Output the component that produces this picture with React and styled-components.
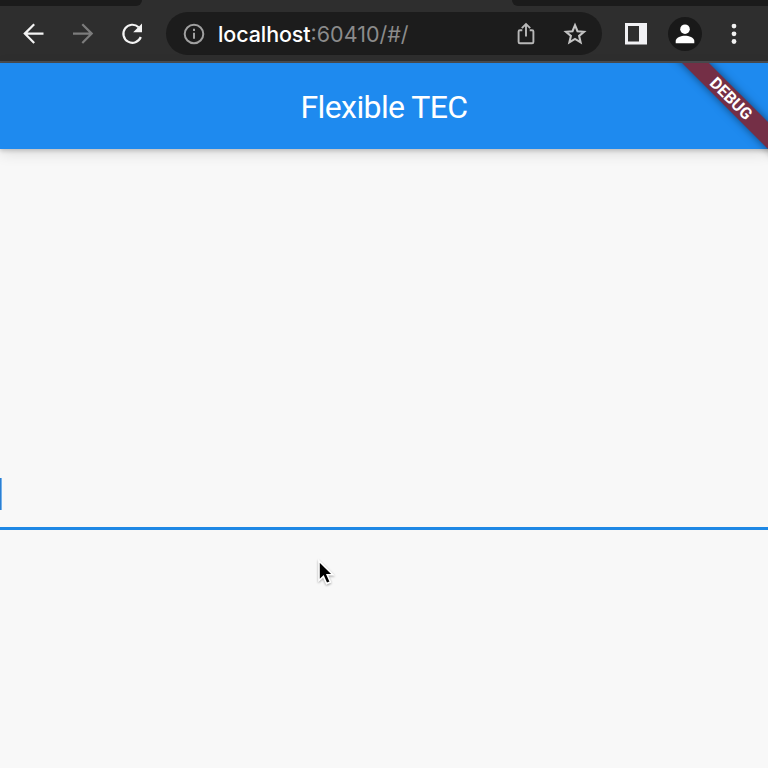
import React from "react";
import styled, { createGlobalStyle } from "styled-components";

const GlobalStyle = createGlobalStyle`
  * { box-sizing: border-box; }
  body { margin: 0; background: #f8f8f8; }
`;

const Window = styled.div`
  position: relative;
  display: flex;
  flex-direction: column;
  width: 768px;
  height: 768px;
  overflow: hidden;
  background: #f8f8f8;
`;

const TabStrip = styled.div`
  display: flex;
  justify-content: space-between;
  flex: none;
  height: 6px;
  background: #2e2e2e;
`;

const InactiveTab = styled.div`
  width: ${(p) => p.$width}px;
  background: #1b1b1b;
  border-radius: ${(p) => (p.$side === "left" ? "0 0 8px 0" : "0 0 0 8px")};
`;

const Toolbar = styled.div`
  display: flex;
  align-items: center;
  flex: none;
  height: 57px;
  padding: 0 19px 0 19px;
  background: #2e2e2e;
  border-bottom: 2px solid #4b4d50;
`;

const IconButton = styled.button`
  display: flex;
  flex: none;
  width: 30px;
  height: 30px;
  padding: 0;
  margin: 0 ${(p) => p.$gap || 0}px 0 0;
  border: 0;
  background: none;
  color: ${(p) => p.$color || "#f4f4f4"};
`;

const AddressBar = styled.div`
  display: flex;
  align-items: center;
  flex: none;
  width: 436px;
  height: 43px;
  margin-right: 19px;
  padding: 0 12px 0 13px;
  border-radius: 22px;
  background: #1c1c1c;
`;

const Url = styled.span`
  flex: 1;
  margin-left: 9px;
  font: 400 21.5px/30px Inter, Roboto, sans-serif;
  color: #8b8b8b;
  white-space: nowrap;
`;

const Host = styled.span`
  color: #ffffff;
  font-weight: 500;
  letter-spacing: -0.1px;
`;

const Avatar = styled.div`
  display: flex;
  align-items: center;
  justify-content: center;
  flex: none;
  width: 34px;
  height: 34px;
  margin-right: 17px;
  border-radius: 50%;
  background: #191919;
`;

const AppBar = styled.header`
  position: relative;
  display: flex;
  align-items: center;
  justify-content: center;
  flex: none;
  height: 86px;
  background: #1e8aef;
  box-shadow: 0 2px 4px rgba(0, 0, 0, 0.16), 0 4px 14px rgba(0, 0, 0, 0.12);
`;

const Title = styled.h1`
  margin: 0;
  padding-top: 1px;
  font: 400 32px/40px Roboto, sans-serif;
  letter-spacing: -0.6px;
  color: #ffffff;
`;

const BannerCorner = styled.div`
  position: absolute;
  top: 0;
  right: 0;
  width: 110px;
  height: 110px;
  overflow: hidden;
`;

const Banner = styled.div`
  position: absolute;
  top: 26px;
  left: -17px;
  width: 180px;
  height: 19px;
  transform: rotate(45deg);
  background: #742f46;
  box-shadow: 0 0 9px rgba(0, 0, 0, 0.5);
  font: 700 16.3px/20px Roboto, sans-serif;
  text-align: center;
  color: #ffffff;
`;

const Content = styled.main`
  flex: 1;
  padding-top: 317px;
`;

const TextField = styled.div`
  height: 64px;
  padding-top: 12px;
  border-bottom: 3px solid #1e88e5;
`;

const Caret = styled.div`
  width: 2px;
  height: 32px;
  background: linear-gradient(90deg, #2c7fd2 50%, #73b1eb 50%);
`;

const Pointer = styled.svg`
  position: absolute;
  left: 315px;
  top: 556px;
  filter: drop-shadow(0 1px 1px rgba(0, 0, 0, 0.35));
`;

function Glyph({ children, fill = "none", stroke = "currentColor", width = 2.2 }) {
  return (
    <svg width="30" height="30" viewBox="0 0 30 30" fill={fill} stroke={stroke} strokeWidth={width}>
      {children}
    </svg>
  );
}

export default function App() {
  return (
    <Window>
      <GlobalStyle />
      <TabStrip>
        <InactiveTab $side="left" $width={142} />
        <InactiveTab $side="right" $width={256} />
      </TabStrip>
      <Toolbar>
        <IconButton $gap={19}>
          <Glyph><path d="M24.5 14.6H6.2M15.2 5.2 5.8 14.6l9.4 9.4" /></Glyph>
        </IconButton>
        <IconButton $gap={19} $color="#7c7c7c">
          <Glyph><path d="M5 14.6h18.3M14.3 5.2l9.4 9.4-9.4 9.4" /></Glyph>
        </IconButton>
        <IconButton $gap={19}>
          <Glyph>
            <path d="M21.6 8.2A9 9 0 1 0 23.8 18" />
            <path d="M25 4.4v8.8h-8.8z" fill="currentColor" stroke="none" />
          </Glyph>
        </IconButton>
        <AddressBar>
          <IconButton $color="#a0a0a0">
            <Glyph width={2}>
              <circle cx="15" cy="15" r="9.3" />
              <path d="M15 13.8v6M15 9.8v2.2" />
            </Glyph>
          </IconButton>
          <Url><Host>localhost</Host>:60410/#/</Url>
          <IconButton $gap={19} $color="#b8b8b8">
            <Glyph width={1.9}>
              <path d="M11.3 11.2H8.9q-1.3 0-1.3 1.3v10.4q0 1.3 1.3 1.3h12.2q1.3 0 1.3-1.3V12.5q0-1.3-1.3-1.3h-2.4M15 17.5V6M10.8 9.2 15 5l4.2 4.2" />
            </Glyph>
          </IconButton>
          <IconButton $color="#c4c4c4">
            <Glyph width={2.1}>
              <path d="m15 6.2 2.5 6 6.5.55-4.9 4.25 1.5 6.35-5.6-3.4-5.6 3.4 1.5-6.35L6 12.75l6.5-.55z" />
            </Glyph>
          </IconButton>
        </AddressBar>
        <IconButton $gap={17}>
          <Glyph fill="#f1f1f4" stroke="none">
            <path fillRule="evenodd" d="M4 4h22v21.5H4zM7 7v15.5h11V7z" />
          </Glyph>
        </IconButton>
        <Avatar>
          <Glyph fill="#ffffff" stroke="none">
            <circle cx="15" cy="10.2" r="4.8" />
            <path d="M5.7 24.3v-2.4c0-3.2 5.7-5.1 9.3-5.1s9.3 1.9 9.3 5.1v2.4z" />
          </Glyph>
        </Avatar>
        <IconButton>
          <Glyph fill="#f1f1f1" stroke="none">
            <circle cx="15" cy="7.1" r="2.4" />
            <circle cx="15" cy="14.8" r="2.4" />
            <circle cx="15" cy="22.5" r="2.4" />
          </Glyph>
        </IconButton>
      </Toolbar>
      <AppBar>
        <Title>Flexible TEC</Title>
        <BannerCorner>
          <Banner>DEBUG</Banner>
        </BannerCorner>
      </AppBar>
      <Content>
        <TextField>
          <Caret />
        </TextField>
      </Content>
      <Pointer width="24" height="32" viewBox="0 0 24 32">
        <path
          d="M4 5v19.5l4.4-4.1 3.2 7.2 3.8-1.6-3.2-7.2h5.7z"
          fill="#000000"
          stroke="#ffffff"
          strokeWidth="1.6"
        />
      </Pointer>
    </Window>
  );
}
